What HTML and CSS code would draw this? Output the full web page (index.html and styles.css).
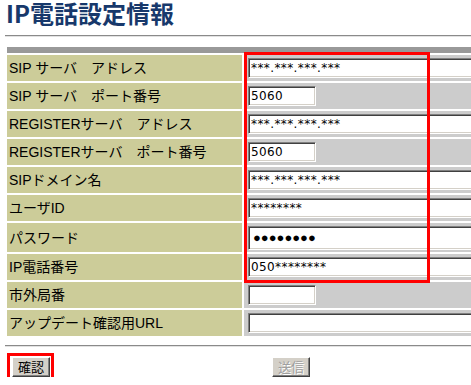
FILE: index.html
```html
<!DOCTYPE html>
<html lang="ja">
<head>
<meta charset="utf-8">
<title>IP電話設定情報</title>
<link rel="stylesheet" href="styles.css">
</head>
<body>
<h1 class="title"><span class="title-text">IP電話設定情報</span></h1>
<hr class="rule">
<table class="settings">
  <tr class="head"><td colspan="2"></td></tr>
  <tr><th>SIP サーバ　アドレス</th><td><input class="field long" value="***.***.***.***" readonly></td></tr>
  <tr><th>SIP サーバ　ポート番号</th><td><input class="field short" value="5060" readonly></td></tr>
  <tr><th>REGISTERサーバ　アドレス</th><td><input class="field long" value="***.***.***.***" readonly></td></tr>
  <tr><th>REGISTERサーバ　ポート番号</th><td><input class="field short" value="5060" readonly></td></tr>
  <tr><th>SIPドメイン名</th><td><input class="field long" value="***.***.***.***" readonly></td></tr>
  <tr><th>ユーザID</th><td><input class="field long" value="********" readonly></td></tr>
  <tr class="tall"><th>パスワード</th><td><input class="field long pass" value="●●●●●●●●" readonly></td></tr>
  <tr><th>IP電話番号</th><td><input class="field long" value="050********" readonly></td></tr>
  <tr><th>市外局番</th><td><input class="field short" value="" readonly></td></tr>
  <tr><th>アップデート確認用URL</th><td><input class="field long" value="" readonly></td></tr>
</table>
<hr class="rule rule-bottom">
<div class="actions">
  <button class="btn" type="button">確認</button>
  <button class="btn" type="button" disabled>送信</button>
</div>
<div class="mark mark-fields"></div>
<div class="mark mark-confirm"></div>
</body>
</html>
```

FILE: styles.css
```css
html {
  overflow: hidden;
}
body {
  margin: 0;
  padding: 0 0 0 5px;
  background: #ffffff;
  font-family: "Liberation Sans", "Noto Sans CJK JP", sans-serif;
  color: #000;
  position: relative;
  width: 700px;
}
.title {
  box-sizing: border-box;
  margin: 0;
  height: 35px;
  padding-top: 1px;
  font-family: "Noto Sans CJK JP", sans-serif;
  font-weight: bold;
  font-size: 24px;
  line-height: 24px;
  color: #17386b;
  white-space: nowrap;
}
.title-text {
  display: inline-block;
  padding-left: 1px;
}
.rule {
  margin: 0;
  width: 466px;
  height: 0;
  border: 0;
  border-top: 1px solid #8a8a8a;
  border-bottom: 1px solid #e2e2e2;
}
.settings {
  margin-top: 8px;
  border-collapse: separate;
  border-spacing: 2px;
  margin-left: 0;
  font-size: 14px;
  line-height: 16px;
}
.settings .head td {
  height: 6px;
  padding: 0;
  background: #999999;
}
.settings th {
  width: 233px;
  height: 26px;
  padding: 0 0 0 2px;
  text-align: left;
  font-weight: normal;
  background: #cccc99;
  white-space: nowrap;
  vertical-align: middle;
}
.settings td {
  width: 300px;
  height: 26px;
  padding: 0 0 0 4px;
  background: #cccccc;
  vertical-align: middle;
}
.settings .tall th,
.settings .tall td {
  height: 29px;
}
.field {
  display: block;
  box-sizing: border-box;
  height: 20px;
  margin: 0;
  padding: 0 2px;
  border: 1px solid;
  border-color: #808080 #ffffff #ffffff #808080;
  box-shadow: inset 1px 1px 0 #404040, inset -1px -1px 0 #d4d0c8;
  background: #ffffff;
  font-family: "DejaVu Sans", sans-serif;
  font-size: 12px;
  letter-spacing: 0.4px;
  color: #000;
  outline: none;
}
.field.long {
  width: 260px;
}
.field.short {
  width: 68px;
}
.field.pass {
  height: 24px;
  font-family: "Liberation Sans", sans-serif;
  font-size: 13px;
  letter-spacing: 0;
  padding-left: 4px;
}
.rule-bottom {
  margin-top: 7px;
}
.actions {
  display: flex;
  gap: 222px;
  margin-top: 10px;
  padding-left: 7px;
}
.btn {
  box-sizing: border-box;
  width: 38px;
  height: 20px;
  margin: 0;
  padding: 0;
  background: #d4d0c8;
  border: 1px solid;
  border-color: #ffffff #404040 #404040 #ffffff;
  box-shadow: inset -1px -1px 0 #808080;
  font-family: "Noto Sans CJK JP", sans-serif;
  font-size: 13px;
  line-height: 16px;
  color: #000;
}
.btn:disabled {
  color: #a0a0a0;
  text-shadow: 1px 1px 0 #ffffff;
}
.mark {
  position: absolute;
  box-sizing: border-box;
  border: 3px solid #ff0000;
}
.mark-fields {
  left: 244px;
  top: 52px;
  width: 186px;
  height: 231px;
}
.mark-confirm {
  left: 7px;
  top: 353px;
  width: 47px;
  height: 30px;
}
```
